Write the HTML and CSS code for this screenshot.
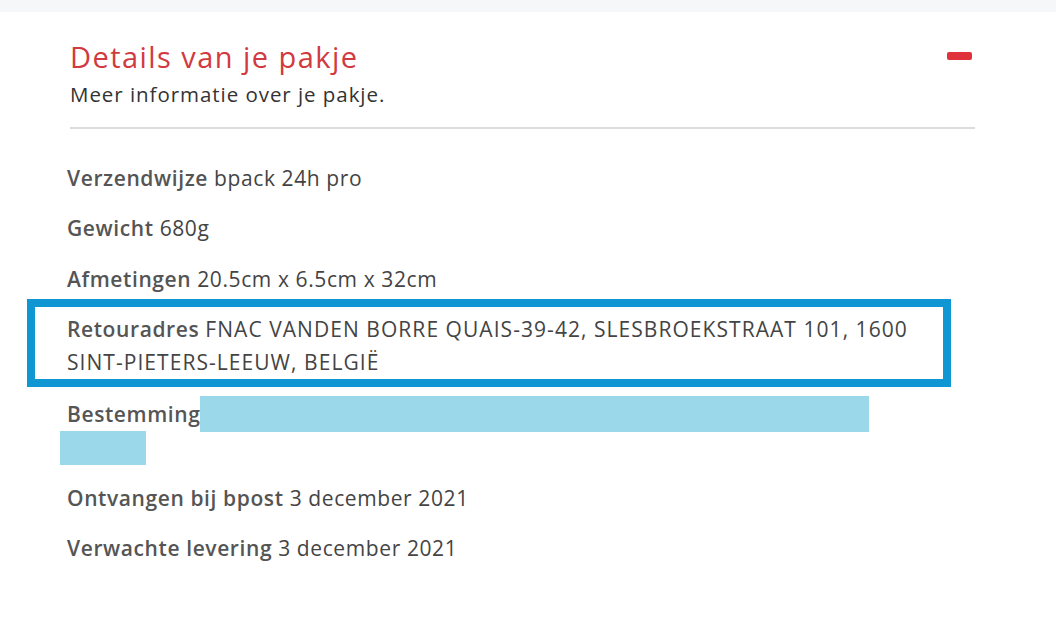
FILE: index.html
```html
<!DOCTYPE html>
<html lang="nl">
<head>
<meta charset="utf-8">
<title>Details van je pakje</title>
<link rel="stylesheet" href="styles.css">
</head>
<body>
<div class="topband"></div>
<section class="card">
  <header class="card-header">
    <div class="titles">
      <h2 class="title">Details van je pakje</h2>
      <p class="subtitle">Meer informatie over je pakje.</p>
    </div>
    <button class="collapse" aria-label="Inklappen"><span class="minus"></span></button>
  </header>
  <div class="details">
    <p class="row"><span class="label">Verzendwijze</span> bpack 24h pro</p>
    <p class="row"><span class="label">Gewicht</span> 680g</p>
    <p class="row"><span class="label">Afmetingen</span> 20.5cm x 6.5cm x 32cm</p>
    <p class="row highlighted"><span class="label">Retouradres</span> <span class="address">FNAC VANDEN BORRE QUAIS-39-42, SLESBROEKSTRAAT 101, 1600 <span class="nowrap">SINT-PIETERS-LEEUW,</span> BELGIË</span></p>
    <p class="row"><span class="label">Bestemming</span><span class="redact redact-1"></span><br><span class="redact redact-2"></span></p>
    <p class="row"><span class="label">Ontvangen bij bpost</span> 3 december 2021</p>
    <p class="row"><span class="label">Verwachte levering</span> 3 december 2021</p>
  </div>
</section>
</body>
</html>
```

FILE: styles.css
```css
html, body {
  margin: 0;
  padding: 0;
  background: #ffffff;
}

body {
  font-family: "Open Sans", "Noto Sans", Arial, sans-serif;
  color: #444444;
  width: 1056px;
  height: 630px;
  overflow: hidden;
}

.topband {
  height: 12px;
  background: #f6f7f9;
}

.card {
  padding: 28px 0 0 67px;
}

.card-header {
  display: flex;
  justify-content: space-between;
  align-items: flex-start;
  width: 905px;
  margin-left: 3px;
  padding-bottom: 21px;
  border-bottom: 2px solid #dcdcdc;
}

.title {
  margin: 0;
  font-size: 29px;
  line-height: 34px;
  font-weight: 400;
  letter-spacing: 1.45px;
  color: #d13a40;
}

.subtitle {
  margin: 8px 0 0;
  font-size: 20.5px;
  line-height: 24px;
  font-weight: 500;
  letter-spacing: 0.95px;
  color: #333333;
}

.collapse {
  margin: 12px 3px 0 0;
  padding: 0;
  border: 0;
  background: transparent;
  display: flex;
}

.minus {
  display: block;
  width: 25px;
  height: 8px;
  border-radius: 2px;
  background: #df323b;
}

.details {
  width: 908px;
  padding-top: 32.5px;
}

.row {
  position: relative;
  margin: 0 0 17.5px;
  font-size: 21px;
  line-height: 33px;
  letter-spacing: 0.6px;
  color: #444444;
}

.label {
  font-weight: 600;
  color: #555555;
}

.address {
  letter-spacing: 1.05px;
}

.nowrap {
  white-space: nowrap;
}

.highlighted {
  margin-bottom: 19px;
}

.highlighted::after {
  content: "";
  position: absolute;
  top: -14.5px;
  bottom: -7.5px;
  left: -40px;
  right: 24px;
  border: 8px solid #1196d4;
}

.redact {
  display: inline-block;
  vertical-align: top;
  background: #9bd8ea;
}

.redact-1 {
  width: 669px;
  height: 36px;
  margin: -2.5px 0 -0.5px 0;
}

.redact-2 {
  width: 86px;
  height: 34px;
  margin: -0.5px 0 -0.5px -7px;
}
```
